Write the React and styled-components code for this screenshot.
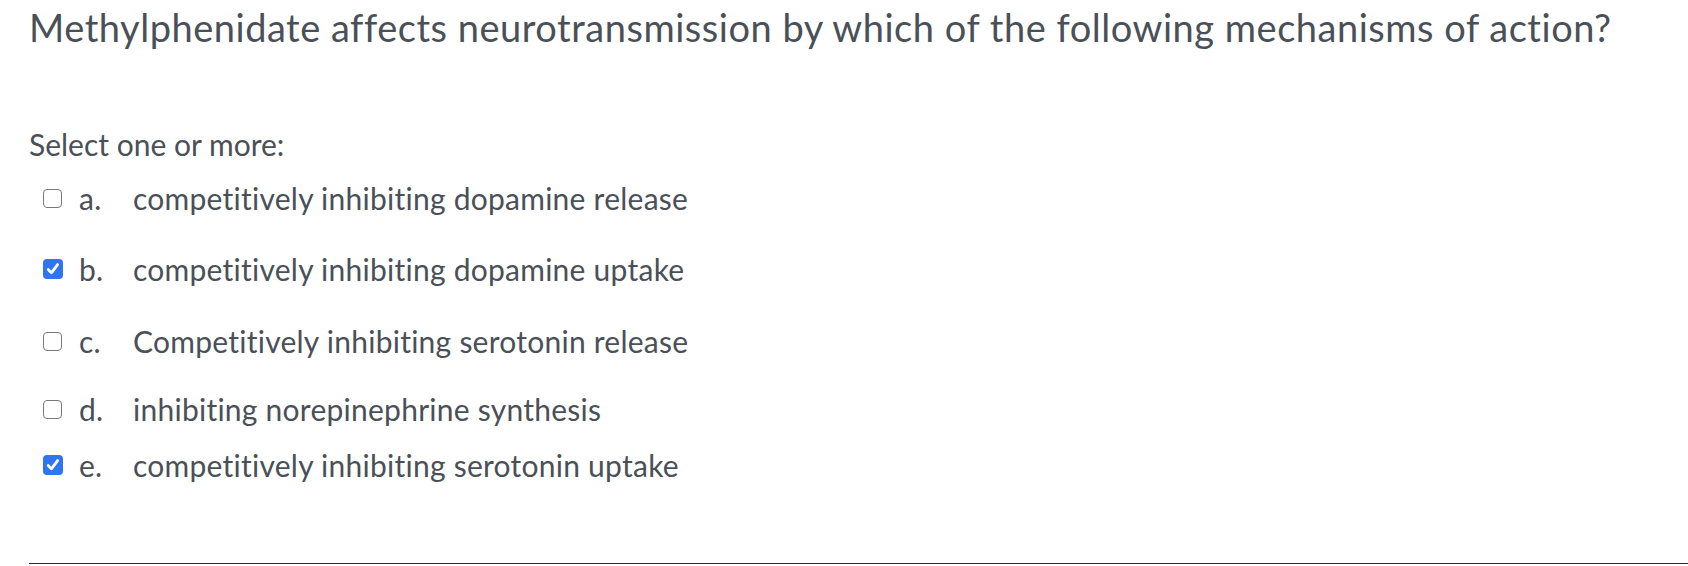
import React from "react";
import styled, { createGlobalStyle } from "styled-components";

const Global = createGlobalStyle`
  html, body { margin: 0; padding: 0; background: #ffffff; }
  body { font-family: "Lato", "Open Sans", sans-serif; color: #4a5057; }
`;

const Page = styled.div`
  width: 1688px;
  height: 566px;
  box-sizing: border-box;
  padding-left: 29px;
  display: flex;
  flex-direction: column;
  overflow: hidden;
`;

const Title = styled.h1`
  margin: 0;
  padding-top: 6px;
  font-size: 38px;
  line-height: 43px;
  letter-spacing: 0.52px;
  font-weight: 400;
  color: #4a5057;
  white-space: nowrap;
`;

const Prompt = styled.div`
  margin-top: 78px;
  font-size: 30px;
  line-height: 34px;
  letter-spacing: 0;
  color: #4a5057;
`;

const List = styled.div`
  display: flex;
  flex-direction: column;
  padding-top: 2px;
  padding-left: 14px;
`;

const Row = styled.label`
  display: flex;
  align-items: center;
  height: ${(p) => p.$h}px;
  font-size: 30px;
  letter-spacing: 0.25px;
  color: #4a5057;
`;

const Box = styled.span`
  width: ${(p) => (p.$checked ? 20 : 19)}px;
  height: ${(p) => (p.$checked ? 20 : 19)}px;
  box-sizing: border-box;
  border-radius: 4px;
  border: ${(p) => (p.$checked ? "none" : "1.5px solid #77797d")};
  background: ${(p) => (p.$checked ? "#2f74f3" : "#ffffff")};
  display: flex;
  align-items: center;
  justify-content: center;
  flex-shrink: 0;
`;

const Letter = styled.span`
  width: 54px;
  margin-left: ${(p) => (p.$checked ? 16 : 17)}px;
  flex-shrink: 0;
`;

const Text = styled.span``;

const Rule = styled.div`
  margin-top: auto;
  margin-bottom: 2px;
  height: 1px;
  background: #2a2356;
`;

const Check = () => (
  <svg width="16" height="16" viewBox="0 0 16 16">
    <path d="M3.2 8.6 L6.4 11.8 L12.6 3.6" fill="none" stroke="#fff" strokeWidth="2.8" strokeLinecap="round" strokeLinejoin="round" />
  </svg>
);

const options = [
  { l: "a.", t: "competitively inhibiting dopamine release", c: false, h: 70 },
  { l: "b.", t: "competitively inhibiting dopamine uptake", c: true, h: 72 },
  { l: "c.", t: "Competitively inhibiting serotonin release", c: false, h: 72 },
  { l: "d.", t: "inhibiting norepinephrine synthesis", c: false, h: 64 },
  { l: "e.", t: "competitively inhibiting serotonin uptake", c: true, h: 48 },
];

export default function App() {
  return (
    <>
      <Global />
      <Page>
        <Title>Methylphenidate affects neurotransmission by which of the following mechanisms of action?</Title>
        <Prompt>Select one or more:</Prompt>
        <List>
          {options.map((o) => (
            <Row key={o.l} $h={o.h}>
              <Box $checked={o.c}>{o.c && <Check />}</Box>
              <Letter $checked={o.c}>{o.l}</Letter>
              <Text>{o.t}</Text>
            </Row>
          ))}
        </List>
        <Rule />
      </Page>
    </>
  );
}
